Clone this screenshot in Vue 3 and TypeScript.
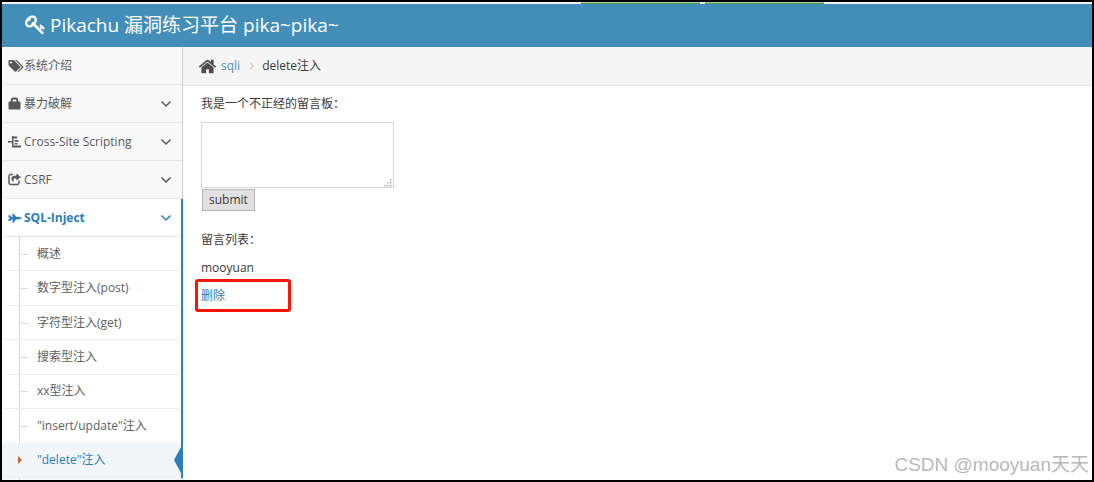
<script setup lang="ts">
import { ref } from 'vue'

interface MenuItem {
  label: string
  icon: string
  expandable: boolean
  active?: boolean
}

const menu: MenuItem[] = [
  { label: '系统介绍', icon: 'tags', expandable: false },
  { label: '暴力破解', icon: 'lock', expandable: true },
  { label: 'Cross-Site Scripting', icon: 'xss', expandable: true },
  { label: 'CSRF', icon: 'share', expandable: true },
  { label: 'SQL-Inject', icon: 'jet', expandable: true, active: true },
]

const submenu: string[] = [
  '概述',
  '数字型注入(post)',
  '字符型注入(get)',
  '搜索型注入',
  'xx型注入',
  '"insert/update"注入',
  '"delete"注入',
]

const current = '"delete"注入'
const message = ref('')
const messages = ref<string[]>(['mooyuan'])
</script>

<template>
  <div class="frame">
    <div class="strip"><i></i><i></i></div>
    <header class="navbar">
      <svg class="key" viewBox="0 0 1792 1792" aria-hidden="true"><path d="M832 512q0-80-56-136t-136-56-136 56-56 136q0 42 19 83-41-19-83-19-80 0-136 56t-56 136 56 136 136 56 136-56 56-136q0-42-19-83 41 19 83 19 80 0 136-56t56-136zm851 704q0 17-49 66t-66 49q-9 0-28.5-16t-36.5-33-38.5-40-24.5-26l-96 96 220 220q28 28 28 68 0 42-39 81t-81 39q-40 0-68-28l-671-671q-176 131-365 131-163 0-265.5-102.5t-102.5-265.5q0-160 95-313t248-248 313-95q163 0 265.5 102.5t102.5 265.5q0 189-131 365l355 355 96-96q-3-3-26-24.5t-40-38.5-33-36.5-16-28.5q0-17 49-66t66-49q13 0 23 10 6 6 46 44.5t82 79.5 86.5 86 73 78 28.5 41z" /></svg>
      <span>Pikachu 漏洞练习平台 pika~pika~</span>
    </header>

    <div class="body">
      <nav class="sidebar">
        <ul class="menu">
          <li v-for="item in menu" :key="item.label" :class="{ active: item.active }">
            <a href="#" class="entry">
              <svg v-if="item.icon === 'tags'" class="icon" viewBox="0 0 1920 1792" aria-hidden="true"><path d="M448 448q0-53-37.5-90.5t-90.5-37.5-90.5 37.5-37.5 90.5 37.5 90.5 90.5 37.5 90.5-37.5 37.5-90.5zm1067 576q0 53-37 90l-491 492q-39 37-91 37-53 0-90-37l-715-716q-38-37-64.5-101t-26.500-117v-416q0-52 38-90t90-38h416q53 0 117 26.500t102 64.500l715 714q37 39 37 91zm384 0q0 53-37 90l-491 492q-39 37-91 37-36 0-59-14t-53-45l470-470q37-37 37-90 0-52-37-91l-715-714q-38-38-102-64.500t-117-26.500h224q53 0 117 26.500t102 64.500l715 714q37 39 37 91z" /></svg>
              <svg v-else-if="item.icon === 'lock'" class="icon" viewBox="0 0 16 14" aria-hidden="true"><path d="M1.500 4.500h10q1 0 1 1v6q0 1-1 1h-10q-1 0-1-1v-6q0-1 1-1z" /><path class="line" d="M3.700 6V3.500Q3.700 1.500 5.500 1.500h2q1.800 0 1.800 2V6" /></svg>
              <svg v-else-if="item.icon === 'xss'" class="icon" viewBox="0 0 16 14" aria-hidden="true"><path d="M0 6h4v1.500H0zM4 1h1.500v11.500H4zM5 1.500h4v2H5zM6.500 5h4v1.700h-4zM6.500 8h3v1.500h-3zM5 10.600h8v1.900H5z" /></svg>
              <svg v-else-if="item.icon === 'share'" class="icon share" viewBox="0 0 2048 1792" aria-hidden="true"><path d="M1472 989v259q0 119-84.500 203.500t-203.500 84.500h-832q-119 0-203.500-84.500t-84.500-203.500v-832q0-119 84.500-203.500t203.500-84.500h255q13 0 22.500 9.500t9.500 22.500q0 27-26 32-77 26-133 60-10 4-16 4h-112q-66 0-113 47t-47 113v832q0 66 47 113t113 47h832q66 0 113-47t47-113v-214q0-19 18-29 28-13 54-37 16-16 35-8 21 9 21 29zm110-496l-384 384q-18 19-45 19-12 0-25-5-39-17-39-59v-192h-60q-263 0-338 131-59 107-14 283 3 23-20 34-26 0-38-13-151-170-151-380 0-297 400-297h221v-192q0-42 39-59 43-13 70 14l384 384q19 19 19 45t-19 45z" /></svg>
              <svg v-else class="icon" viewBox="0 0 16 14" aria-hidden="true"><path d="M.5 4.300h1.700L3.700 6h1L4.300 2.800h1.500L8 5.800l3.200.3 3.300 1.100-3.300 1.100-3.200.3-2.200 3H4.300l.4-3.200h-1L2.200 10H.5V8.200l1.200-.3V6.500L.5 6.200z" /></svg>
              <span class="label">{{ item.label }}</span>
              <svg v-if="item.expandable" class="chevron" viewBox="0 0 12 8" aria-hidden="true"><path d="M1.500 1.500 6 6l4.500-4.500" /></svg>
            </a>
            <ul v-if="item.active" class="submenu">
              <li v-for="sub in submenu" :key="sub" :class="{ current: sub === current }">
                <a href="#">{{ sub }}</a>
              </li>
            </ul>
          </li>
        </ul>
      </nav>

      <main class="main">
        <nav class="crumbs" aria-label="breadcrumb">
          <svg class="home" viewBox="0 0 1792 1792" aria-hidden="true"><path d="M1472 992v480q0 26-19 45t-45 19h-384v-384h-256v384h-384q-26 0-45-19t-19-45v-480q0-1 .5-3t.5-3l575-474 575 474q1 2 1 6zm223-69l-62 74q-8 9-21 11h-3q-13 0-21-7l-692-577-692 577q-12 8-24 7-13-2-21-11l-62-74q-8-10-7-23.500t11-21.500l719-599q32-26 76-26t76 26l244 204v-195q0-14 9-23t23-9h192q14 0 23 9t9 23v408l219 182q10 8 11 21.500t-7 23.500z" /></svg>
          <a href="#">sqli</a>
          <svg class="sep" viewBox="0 0 6 8" aria-hidden="true"><path d="M1 .5 4.500 4 1 7.500" /></svg>
          <span>delete注入</span>
        </nav>
        <div class="content">
          <form @submit.prevent>
            <label for="message">我是一个不正经的留言板：</label>
            <div class="field">
              <textarea id="message" v-model="message"></textarea>
              <svg class="grip" viewBox="0 0 9 9" aria-hidden="true"><path d="M7 1h1.500v1.500H7zM7 4h1.500v1.500H7zM7 7h1.500v1.500H7zM4 4h1.500v1.500H4zM4 7h1.500v1.500H4zM1 7h1.500v1.500H1z" /></svg>
            </div>
            <button type="submit">submit</button>
          </form>
          <section class="list">
            <p>留言列表：</p>
            <p v-for="m in messages" :key="m">{{ m }}</p>
            <div class="marked"><a href="#">删除</a></div>
          </section>
        </div>
      </main>
    </div>
    <div class="watermark">CSDN @mooyuan天天</div>
  </div>
</template>

<style>
body {
  margin: 0;
}
</style>

<style scoped>
* {
  box-sizing: border-box;
}
.frame {
  position: relative;
  display: flex;
  flex-direction: column;
  height: 100vh;
  overflow: hidden;
  border: 2px solid #000;
  background: #fff;
  color: #393939;
  font: 12px/20px "Open Sans", "Noto Sans CJK SC", sans-serif;
}
a {
  color: #337ab7;
  text-decoration: none;
}
ul {
  margin: 0;
  padding: 0;
  list-style: none;
}
.strip {
  display: flex;
  flex: none;
  justify-content: center;
  gap: 5px;
  height: 2px;
  padding-left: 310px;
  background: #f3f1f5;
}
.strip i {
  width: 119px;
  border: 1px solid #4c9a52;
  border-top-color: #a9d5a5;
}
.navbar {
  display: flex;
  flex: none;
  align-items: center;
  gap: 4px;
  height: 43px;
  padding: 0 22px 2px 23px;
  background: #438eb9;
  color: #fff;
  font-size: 19px;
  line-height: 40px;
}
.key {
  width: 21px;
  height: 21px;
  fill: #fff;
}
.body {
  display: flex;
  flex: 1;
  min-height: 0;
}
.sidebar {
  flex: none;
  width: 181px;
  background: #f8f8f8;
  box-shadow: inset -1px 0 #ccc;
}
.entry {
  display: flex;
  align-items: center;
  height: 38px;
  padding: 0 10px 0 6px;
  margin-right: 1px;
  border-bottom: 1px solid #e5e5e5;
  color: #585858;
}
.icon {
  flex: none;
  width: 16px;
  height: 14px;
  fill: currentColor;
}
.share {
  stroke: currentColor;
  stroke-width: 70;
}
.line {
  fill: none;
  stroke: currentColor;
  stroke-width: 2;
}
.label {
  flex: 1;
  white-space: nowrap;
}
.chevron {
  width: 12px;
  height: 8px;
  fill: none;
  stroke: currentColor;
  stroke-width: 1.5;
}
.active {
  background: #fff;
  border-right: 2px solid #2b7dbc;
}
.active .entry {
  margin-right: 0;
  padding-right: 9px;
  color: #2b7dbc;
  font-weight: 700;
}
.submenu {
  position: relative;
  display: flex;
  flex-direction: column;
  height: 241px;
}
.submenu::before {
  content: "";
  position: absolute;
  top: 0;
  bottom: -4px;
  left: 17px;
  border-left: 1px solid #ccd7e2;
}
.submenu li {
  position: relative;
  display: flex;
  flex: 1;
  align-items: center;
  padding-left: 35px;
  border-bottom: 1px solid #f0f0f0;
}
.submenu li::before {
  content: "";
  position: absolute;
  top: 50%;
  left: 19px;
  width: 7px;
  border-top: 1px solid #ccd7e2;
}
.submenu a {
  color: #616161;
}
.submenu .current {
  background: #f2f6f9;
}
.submenu .current a {
  color: #2b7dbc;
}
.submenu .current::before {
  top: 12px;
  left: 16px;
  width: 0;
  border: solid transparent;
  border-width: 4px 0 4px 4px;
  border-left-color: #c86139;
}
.submenu .current::after {
  content: "";
  position: absolute;
  top: 3px;
  right: 0;
  border: solid transparent;
  border-width: 13px 7px 13px 0;
  border-right-color: #2b7dbc;
}
.main {
  flex: 1;
  min-width: 0;
}
.crumbs {
  display: flex;
  align-items: center;
  height: 39px;
  padding-left: 15px;
  border-bottom: 1px solid #e5e5e5;
  background: #f5f5f5;
}
.crumbs a {
  color: #4c8fbd;
}
.home {
  width: 19px;
  height: 19px;
  margin-right: 4px;
  fill: #4d4d4d;
}
.sep {
  width: 6px;
  height: 8px;
  margin: 0 7px 0 9px;
  fill: none;
  stroke: #b2b6bf;
}
.content {
  padding: 8px 18px;
}
label {
  display: block;
}
.field {
  position: relative;
  width: 193px;
  margin-top: 8px;
}
textarea {
  display: block;
  width: 100%;
  height: 66px;
  padding: 4px;
  border: 1px solid #d5d5d5;
  background: #fff;
  font: inherit;
  resize: none;
}
.grip {
  position: absolute;
  right: 2px;
  bottom: 1px;
  width: 9px;
  height: 9px;
  fill: #aaa;
}
button {
  display: block;
  height: 22px;
  margin: 1px;
  padding: 0 6px;
  border: 1px solid #b4b4b4;
  background: #e1e1e1;
  color: #393939;
  font: inherit;
}
.list {
  margin-top: 19px;
}
p {
  margin: 0 0 8px;
}
.marked {
  width: 96px;
  margin: -7px 0 0 -6px;
  padding: 4px 3px 3px;
  border: 3px solid #f81508;
  border-radius: 3px;
}
.watermark {
  position: absolute;
  right: 3px;
  bottom: 2px;
  color: #b8b8b8;
  font: 19px/26px "Liberation Sans", "Noto Sans CJK SC", sans-serif;
}
</style>
